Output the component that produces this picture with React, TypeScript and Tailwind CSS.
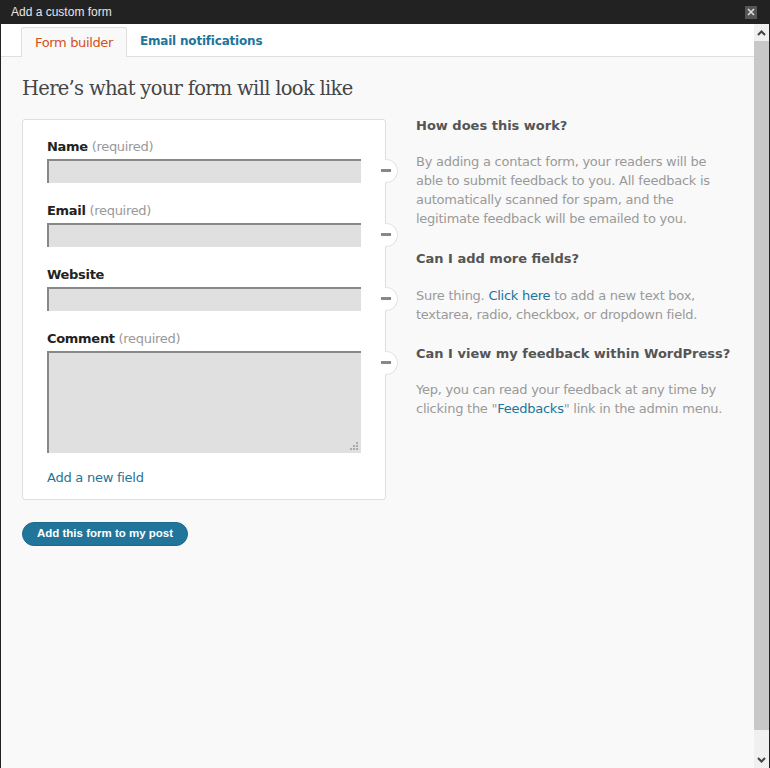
import React from "react";

const sans = { fontFamily: '"DejaVu Sans", Verdana, sans-serif' };

function Field({ label, required, tall }: { label: string; required?: boolean; tall?: boolean }) {
  return (
    <div className="mb-[19px]">
      <div className="h-[18px] leading-[18px] text-[13px] mb-[3px] tracking-[-0.3px]">
        <span className="font-bold text-[#222]">{label}</span>
        {required && <span className="text-[#999]"> (required)</span>}
      </div>
      <div
        className={`relative bg-[#e0e0e0] border-t-2 border-l-2 border-[#888] ${tall ? "h-[102px]" : "h-[24px]"}`}
      >
        {tall && (
          <svg className="absolute right-[2px] bottom-[2px]" width="10" height="10" viewBox="0 0 10 10">
            <rect x="7" y="1" width="2" height="2" fill="#aaa" />
            <rect x="4" y="4" width="2" height="2" fill="#aaa" />
            <rect x="7" y="4" width="2" height="2" fill="#aaa" />
            <rect x="1" y="7" width="2" height="2" fill="#aaa" />
            <rect x="4" y="7" width="2" height="2" fill="#aaa" />
            <rect x="7" y="7" width="2" height="2" fill="#aaa" />
          </svg>
        )}
      </div>
    </div>
  );
}

function FieldRow(props: { label: string; required?: boolean; tall?: boolean }) {
  return (
    <div className="relative">
      <Field {...props} />
      <div className="absolute right-[-37px] top-[21px] w-6 h-6">
        <div className="absolute right-0 top-0 w-[13px] h-6 rounded-r-full border border-l-0 border-[#e3e3e3] bg-white" />
        <div className="absolute left-[7px] top-[10px] w-[10px] h-[3px] bg-[#888]" />
      </div>
    </div>
  );
}

export default function App() {
  return (
    <div className="w-[770px] h-[768px] bg-[#222] flex flex-col overflow-hidden" style={sans}>
      <div className="h-6 shrink-0 flex items-center justify-between pl-[11px] pr-[13px]">
        <span className="text-[12px] text-[#e6e6e6]" style={{ fontFamily: '"Liberation Sans", Arial, sans-serif' }}>
          Add a custom form
        </span>
        <div className="w-3 h-[13px] bg-[#555] flex items-center justify-center">
          <svg width="8" height="8" viewBox="0 0 8 8">
            <path d="M1 1 L7 7 M7 1 L1 7" stroke="#ddd" strokeWidth="1.6" />
          </svg>
        </div>
      </div>
      <div className="flex flex-1 min-h-0 ml-px mr-px">
        <div className="flex-1 flex flex-col bg-[#f9f9f9]">
          <div className="h-[33px] shrink-0 bg-white border-b border-[#dfdfdf] flex items-end pl-[20px] gap-[13px]">
            <div className="h-[30px] w-[106px] border border-b-0 border-[#dfdfdf] rounded-t-[3px] bg-[#f9f9f9] text-[13px] tracking-[-0.35px] text-[#d54e21] flex items-center justify-center mb-[-1px]">
              Form builder
            </div>
            <div className="h-[30px] text-[12px] tracking-[-0.2px] font-bold text-[#21759b] flex items-center">
              Email notifications
            </div>
          </div>
          <div className="pl-[21px] pt-[18px]">
            <h1
              className="text-[19.5px] leading-[28px] text-[#464646] mb-[16px]"
              style={{ fontFamily: '"DejaVu Serif", Georgia, serif', letterSpacing: "-0.7px" }}
            >
              Here’s what your form will look like
            </h1>
            <div className="flex items-start">
              <div className="w-[364px] shrink-0">
                <div className="bg-white border border-[#dfdfdf] rounded-[3px] pl-[24px] pr-[24px] pt-[18px] pb-[12px]">
                  <FieldRow label="Name" required />
                  <FieldRow label="Email" required />
                  <FieldRow label="Website" />
                  <FieldRow label="Comment" required tall />
                  <div className="mt-[-3px] text-[13px] leading-[18px] tracking-[-0.25px] text-[#21759b]">
                    Add a new field
                  </div>
                </div>
                <button
                  className="mt-[22px] h-[24px] w-[166px] rounded-full bg-[#21759b] border border-[#1e6a8d] text-white font-bold text-[11.5px] flex items-center justify-center"
                  style={{ fontFamily: '"Liberation Sans", Arial, sans-serif' }}
                >
                  Add this form to my post
                </button>
              </div>
              <div className="ml-[30px] mt-[-3px] text-[13px] leading-[19px] text-[#999] w-[320px]">
                <h3 className="font-bold text-[#555] mb-[17px]">How does this work?</h3>
                <p className="mb-[21px] tracking-[-0.25px]">
                  By adding a contact form, your readers will be able to submit feedback to you. All feedback is
                  automatically scanned for spam, and the legitimate feedback will be emailed to you.
                </p>
                <h3 className="font-bold text-[#555] mb-[18px]">Can I add more fields?</h3>
                <p className="mb-[20px] tracking-[-0.25px]">
                  Sure thing. <span className="text-[#21759b]">Click here</span> to add a new text box, textarea,
                  radio, checkbox, or dropdown field.
                </p>
                <h3 className="font-bold text-[#555] mb-[17px]">Can I view my feedback within WordPress?</h3>
                <p className="tracking-[-0.25px]">
                  Yep, you can read your feedback at any time by clicking the "
                  <span className="text-[#21759b]">Feedbacks</span>" link in the admin menu.
                </p>
              </div>
            </div>
          </div>
        </div>
        <div className="w-[15px] shrink-0 flex flex-col bg-[#f0f0f0]">
          <div className="h-[17px] flex items-center justify-center">
            <svg width="9" height="6" viewBox="0 0 9 6">
              <path d="M1 5 L4.5 1.5 L8 5" stroke="#444" strokeWidth="2" fill="none" />
            </svg>
          </div>
          <div className="flex-1 bg-[#c8c8c8]" />
          <div className="h-[38px] flex items-end justify-center pb-[5px]">
            <svg width="9" height="6" viewBox="0 0 9 6">
              <path d="M1 1 L4.5 4.5 L8 1" stroke="#444" strokeWidth="2" fill="none" />
            </svg>
          </div>
        </div>
      </div>
    </div>
  );
}
